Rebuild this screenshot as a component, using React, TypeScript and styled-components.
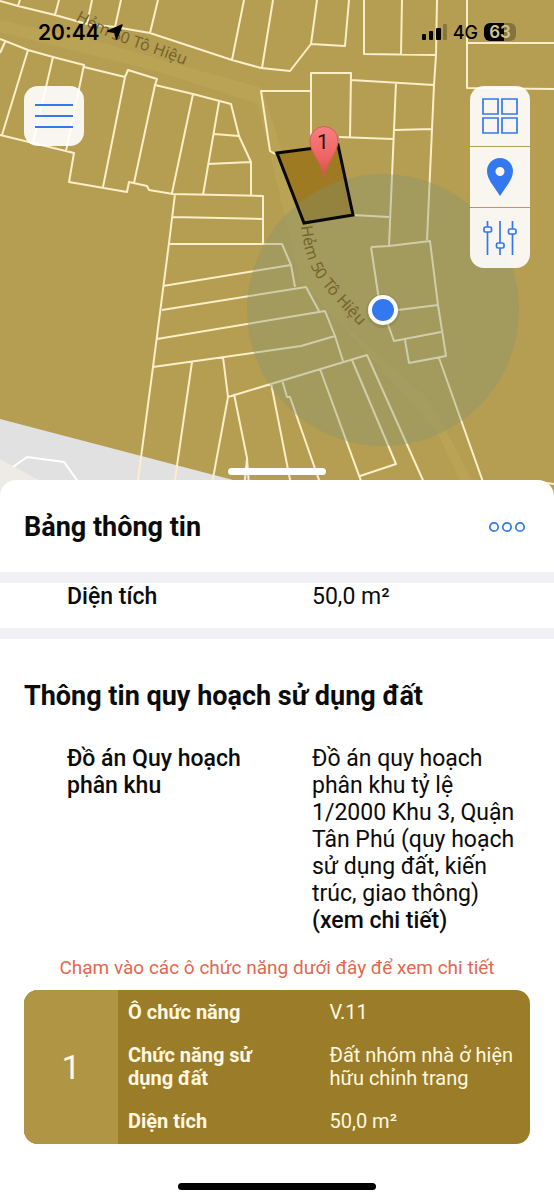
import React from "react";
import styled, { createGlobalStyle } from "styled-components";

const GlobalStyle = createGlobalStyle`
  *, *::before, *::after { box-sizing: border-box; }
  body { margin: 0; background: #fff; color: #0b0b0b; font-family: Roboto, "Noto Sans", sans-serif; }
  h1, h2, p, dl, dt, dd { margin: 0; }
  button { border: 0; padding: 0; font: inherit; color: inherit; background: none; cursor: pointer; }
`;

const Page = styled.main`
  display: flex;
  flex-direction: column;
  min-height: 100vh;
`;

const MapArea = styled.section`
  display: grid;
  grid-template: minmax(0, 1fr) / minmax(0, 1fr);
  height: 496px;
  background: #b59e52;
  overflow: hidden;
`;

const MapCanvas = styled.svg`
  grid-area: 1 / 1;
  display: block;
  width: 100%;
  height: 100%;
`;

const Overlay = styled.div`
  grid-area: 1 / 1;
  z-index: 1;
  display: flex;
  flex-direction: column;
  padding-bottom: 21px;
`;

const StatusBar = styled.div`
  display: flex;
  justify-content: space-between;
  align-items: center;
  height: 64px;
  padding: 0 38px;
  color: #000;
  font-family: Inter, "Liberation Sans", sans-serif;
`;

const StatusGroup = styled.div<{ $gap: number }>`
  display: flex;
  align-items: center;
  gap: ${(p) => p.$gap}px;
`;

const Clock = styled.time`
  font-size: 21px;
  font-weight: 600;
`;

const Network = styled.span`
  font-size: 18px;
  font-weight: 500;
`;

const Battery = styled.span`
  width: 32px;
  height: 18px;
  border-radius: 6px;
  background: linear-gradient(90deg, #000 63%, #84733e 63%);
  color: #d3c38c;
  font-size: 17px;
  font-weight: 600;
  line-height: 18px;
  text-align: center;
`;

const Controls = styled.div`
  display: flex;
  justify-content: space-between;
  align-items: flex-start;
  padding: 22px 24px 0;
`;

const ToolGroup = styled.div`
  display: flex;
  flex-direction: column;
  gap: 1px;
  border-radius: 14px;
  overflow: hidden;
`;

const ToolButton = styled.button`
  display: grid;
  place-items: center;
  width: 60px;
  height: 60px;
  background: rgba(255, 255, 255, 0.9);
`;

const Grabber = styled.div`
  width: 98px;
  height: 7px;
  margin: auto auto 0;
  border-radius: 4px;
  background: #fff;
`;

const Sheet = styled.section`
  position: relative;
  z-index: 2;
  flex: 1;
  display: flex;
  flex-direction: column;
  margin-top: -16px;
  border-radius: 16px 16px 0 0;
  background: #fff;
`;

const SheetHeader = styled.header`
  display: flex;
  justify-content: space-between;
  align-items: center;
  height: 92px;
  padding: 2px 24px 0;
`;

const Title = styled.h1`
  font-size: 27px;
  line-height: 32px;
  font-weight: 700;
`;

const MoreButton = styled.button`
  display: flex;
  align-items: center;
  height: 32px;
  padding: 0 4px;
`;

const Band = styled.hr`
  width: 100%;
  height: 11px;
  margin: 0;
  border: 0;
  background: #f0f0f5;
`;

const Heading = styled.h2`
  padding: 41px 24px 33px;
  font-size: 27px;
  line-height: 32px;
  font-weight: 700;
`;

const Details = styled.dl<{ $bottom: number }>`
  display: grid;
  grid-template-columns: 245fr 218fr;
  padding: 0 24px ${(p) => p.$bottom}px 67px;
  font-size: 23px;
  line-height: 27px;
`;

const Term = styled.dt`
  padding-right: 32px;
  font-weight: 500;
`;

const DetailLink = styled.a`
  display: block;
  color: inherit;
  font-weight: 500;
  text-decoration: none;
`;

const Hint = styled.p`
  padding: 0 24px;
  color: #e2674f;
  font-size: 19px;
  line-height: 24px;
  text-align: center;
`;

const ZoneCard = styled.button`
  display: grid;
  grid-template-columns: 94px minmax(0, 1fr);
  margin: 10px 24px 0;
  border-radius: 14px;
  background: #9b7c28;
  color: #fff8e0;
  text-align: left;
  overflow: hidden;
`;

const ZoneNumber = styled.span`
  display: grid;
  place-items: center;
  background: #b09545;
  font-size: 34px;
`;

const ZoneRows = styled.span`
  display: grid;
  grid-template-columns: 201fr 190fr;
  row-gap: 20px;
  padding: 11px 10px;
  font-size: 20px;
  line-height: 23px;
`;

const ZoneLabel = styled.strong`
  padding-right: 40px;
  font-weight: 700;
`;

const HomeIndicator = styled.div`
  width: 198px;
  height: 7px;
  margin: auto auto 10px;
  border-radius: 4px;
  background: #000;
`;

const blue = "#3478f0";

const parcels = [
  "M0 1L18 6L55 15L87 24L115 27L150 33L232 60L261 68L290 71L311 44L345 46L349 0M317 0L311 44",
  "M20 0L18 6M59 0L55 15M92 0L87 24M121 0L115 27M158 0L150 33M244 0L232 60M273 0L262 68",
  "M0 39L28 50L53 57L84 65L84 67L125 77L128 70L157 79L155 85L193 94L231 104L239 136L251 162V195",
  "M5 42L0 53M28 50L2 135M53 57L33 143M84 65L66 151M125 77L103 187M155 85L134 183M193 94L172 193M219 102L203 195M214 134L239 136M208 164L251 162",
  "M0 135L74 153L69 182L127 192L129 182L147 186L149 190L173 194L263 196V245",
  "M175 194L169 243L153 367L138 480V500M173 217L263 219M170 244L282 244L291 265L295 287",
  "M163 286L291 265M162 310L306 287L319 311M157 339L325 311L335 336L343 361M153 367L301 346L335 336",
  "M192 362L172 500M223 357L228 397L209 500M228 397L367 355L430 496M234 394L247 458L243 500M247 458L250 500",
  "M271 383L294 500M282 380L287 397H290L326 500M320 369L368 500M352 360L396 464L360 476M439 358L488 496",
  "M371 247L389 246L430 241L438 305L446 356L409 363L405 340M371 247L379 300L394 341L441 332M398 310L438 305",
  "M364 0V54L436 55M402 0L401 54M437 0L436 55L434 85L427 240M467 0V88L554 89M467 43H554",
  "M311 91H261L270 151L275 154M311 140V73H351L350 137M351 80L434 85M396 83L389 246M395 130L432 129M339 137L393 139M353 215L389 217",
  "M540 482L554 484",
].join("");

function PlanningMap() {
  return (
    <MapCanvas viewBox="0 0 554 496" preserveAspectRatio="xMidYMin slice" role="img" aria-label="Bản đồ quy hoạch">
      <defs>
        <linearGradient id="pinFill" x1="0" y1="0" x2="0" y2="1">
          <stop offset="0" stopColor="#f97f82" />
          <stop offset=".6" stopColor="#ee6464" />
          <stop offset="1" stopColor="#c8553a" />
        </linearGradient>
        <path id="streetA" d="M75 20Q98 33 120 42Q156 54 214 76" />
        <path id="streetB" d="M301 226Q304 254 315 275Q331 298 378 345" />
      </defs>
      <path d="M0 0H554V496H0Z" fill="#b59e52" />
      <path d="M0 20L100 42L190 68L262 88L305 225L350 330L425 396L446 430L480 496H467L436 430L395 384L300 280L258 104L160 72L0 32Z" fill="#bca656" opacity=".6" />
      <path d="M0 419L233 480L294 496H0Z" fill="#e2e1e1" />
      <path d="M0 459L46 484V496H0Z" fill="#eeeae6" />
      <path d="M13 467L27 457L64 462L84 490" fill="none" stroke="#fff" strokeWidth="2" />
      <path d={parcels} fill="none" stroke="#fbeec8" strokeWidth="2" strokeLinejoin="round" />
      <path d="M277 153L338 145L353 215L304 223Z" fill="#9e7b22" />
      <circle cx="383" cy="310" r="136" fill="#829374" fillOpacity=".35" />
      <g fill="#75642d" fontFamily="'Noto Sans', sans-serif" fontSize="16">
        <text><textPath href="#streetA">Hẻm 50 Tô Hiệu</textPath></text>
        <text><textPath href="#streetB">Hẻm 50 Tô Hiệu</textPath></text>
      </g>
      <path d="M277 153L338 145L353 215L304 223Z" fill="none" stroke="#080808" strokeWidth="3" />
      <path d="M324 178C321 160 310 154 310 140.500A14 14 0 0 1 338 140.500C338 154 327 160 324 178Z" fill="url(#pinFill)" stroke="#cf5f56" />
      <text x="323" y="149" textAnchor="middle" fontFamily="Roboto, sans-serif" fontSize="21" fill="#241010">1</text>
      <circle cx="383" cy="311" r="17" fill="#4d5a30" opacity=".15" />
      <circle cx="383" cy="310" r="13" fill={blue} stroke="#fff" strokeWidth="4" />
    </MapCanvas>
  );
}

export default function App() {
  return (
    <>
      <GlobalStyle />
      <Page>
        <MapArea>
          <PlanningMap />
          <Overlay>
            <StatusBar>
              <StatusGroup $gap={6}>
                <Clock>20:44</Clock>
                <svg width="18" height="18" viewBox="0 0 18 18" aria-hidden="true">
                  <path d="M16 2L10.500 16L8.800 9.300L1.800 8.200Z" stroke="#000" strokeWidth="1.500" strokeLinejoin="round" />
                </svg>
              </StatusGroup>
              <StatusGroup $gap={6}>
                <svg width="25" height="16" viewBox="0 0 25 16" aria-hidden="true">
                  <rect x="0" y="10" width="4" height="6" rx="1" />
                  <rect x="7" y="7" width="4" height="9" rx="1" />
                  <rect x="14" y="4" width="5" height="12" rx="1" />
                  <rect x="21" y="0" width="4" height="16" rx="1" opacity=".25" />
                </svg>
                <Network>4G</Network>
                <Battery>63</Battery>
              </StatusGroup>
            </StatusBar>
            <Controls>
              <ToolGroup>
                <ToolButton aria-label="Menu">
                  <svg width="38" height="26" viewBox="0 0 38 26" stroke={blue} strokeWidth="2">
                    <path d="M0 2H38M0 13H38M0 24H38" />
                  </svg>
                </ToolButton>
              </ToolGroup>
              <ToolGroup>
                <ToolButton aria-label="Lớp bản đồ">
                  <svg width="36" height="36" viewBox="0 0 36 36" fill="none" stroke={blue} strokeWidth="1.7">
                    <path d="M1 1H16V16H1ZM20 1H35V16H20ZM1 20H16V35H1ZM20 20H35V35H20Z" />
                  </svg>
                </ToolButton>
                <ToolButton aria-label="Vị trí">
                  <svg width="26" height="38" viewBox="0 0 26 38">
                    <path fillRule="evenodd" fill={blue} d="M13 0C5.8 0 0 5.8 0 13C0 21 6 27 13 38C20 27 26 21 26 13C26 5.800 20.200 0 13 0ZM13 9A4.500 4.500 0 1 1 13 18A4.500 4.500 0 1 1 13 9Z" />
                  </svg>
                </ToolButton>
                <ToolButton aria-label="Bộ lọc">
                  <svg width="36" height="36" viewBox="0 0 36 36" fill="none" stroke={blue} strokeWidth="1.7">
                    <path d="M5.500 1V7M5.500 12V35M18 1V23M18 28V35M30.500 1V9M30.500 14V35" />
                    <rect x="2" y="7" width="7.500" height="5" rx="1.500" />
                    <rect x="14.500" y="23" width="7.500" height="5" rx="1.500" />
                    <rect x="26.500" y="9" width="7.500" height="5" rx="1.500" />
                  </svg>
                </ToolButton>
              </ToolGroup>
            </Controls>
            <Grabber />
          </Overlay>
        </MapArea>

        <Sheet>
          <SheetHeader>
            <Title>Bảng thông tin</Title>
            <MoreButton aria-label="Thêm">
              <svg width="38" height="12" viewBox="0 0 38 12" fill="none" stroke={blue} strokeWidth="1.700">
                <circle cx="6" cy="6" r="4.200" />
                <circle cx="19" cy="6" r="4.200" />
                <circle cx="32" cy="6" r="4.200" />
              </svg>
            </MoreButton>
          </SheetHeader>
          <Band />
          <Details $bottom={18}>
            <Term>Diện tích</Term>
            <dd>50,0 m²</dd>
          </Details>
          <Band />
          <Heading>Thông tin quy hoạch sử dụng đất</Heading>
          <Details $bottom={22}>
            <Term>Đồ án Quy hoạch phân khu</Term>
            <dd>
              Đồ án quy hoạch phân khu tỷ lệ 1/2000 Khu 3, Quận Tân Phú (quy hoạch sử dụng đất, kiến trúc, giao thông){" "}
              <DetailLink href="#chi-tiet">(xem chi tiết)</DetailLink>
            </dd>
          </Details>
          <Hint>Chạm vào các ô chức năng dưới đây để xem chi tiết</Hint>
          <ZoneCard>
            <ZoneNumber>1</ZoneNumber>
            <ZoneRows>
              <ZoneLabel>Ô chức năng</ZoneLabel>
              <span>V.11</span>
              <ZoneLabel>Chức năng sử dụng đất</ZoneLabel>
              <span>Đất nhóm nhà ở hiện hữu chỉnh trang</span>
              <ZoneLabel>Diện tích</ZoneLabel>
              <span>50,0 m²</span>
            </ZoneRows>
          </ZoneCard>
          <HomeIndicator />
        </Sheet>
      </Page>
    </>
  );
}
